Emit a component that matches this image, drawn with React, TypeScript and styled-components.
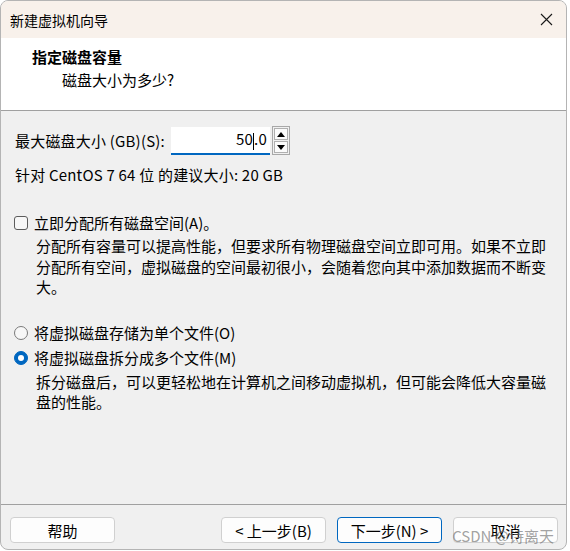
import React from 'react';
import styled, {createGlobalStyle} from 'styled-components';

const GlobalStyle = createGlobalStyle`
  html, body {
    margin: 0;
    padding: 0;
    background: #fff;
  }
  body {
    font-family: 'Noto Sans CJK SC', 'Noto Sans', sans-serif;
    color: #000;
  }
`;

const Window = styled.div`
  position: relative;
  display: flex;
  flex-direction: column;
  width: 565px;
  height: 548px;
  border: 1px solid #b4b4b4;
  border-radius: 8px;
  overflow: hidden;
  background: #f0f0f0;
`;

const TitleBar = styled.div`
  display: flex;
  align-items: center;
  justify-content: space-between;
  height: 37px;
  padding: 0 13px 0 9px;
  background: #f8f1eb;
  font-size: 14px;
`;

const CloseButton = styled.div`
  display: flex;
  width: 13px;
  height: 13px;
`;

const Header = styled.div`
  height: 72px;
  background: #fff;
  border-bottom: 1px solid #a0a0a0;
`;

const HeaderTitle = styled.div`
  margin-top: 9px;
  padding-left: 31px;
  font-size: 15px;
  font-weight: bold;
  line-height: 20px;
`;

const HeaderSub = styled.div`
  margin-top: 3px;
  padding-left: 61px;
  font-size: 15px;
  line-height: 20px;
`;

const Body = styled.div`
  flex: 1;
  padding: 0 0 0 13px;
  font-size: 15px;
  line-height: 20px;
`;

const SizeRow = styled.div`
  display: flex;
  align-items: center;
  margin-top: 15px;
  padding-left: 1px;
  height: 29px;
  letter-spacing: 0.2px;
`;

const NumberBox = styled.div`
  display: flex;
  align-items: center;
  justify-content: flex-end;
  box-sizing: border-box;
  width: 99px;
  height: 28px;
  margin-left: 6px;
  padding-right: 3px;
  background: #fff;
  border-bottom: 2px solid #0067c0;
`;

const Caret = styled.span`
  display: inline-block;
  width: 1px;
  height: 17px;
  background: #000;
  vertical-align: middle;
`;

const Spinner = styled.div`
  display: flex;
  flex-direction: column;
  gap: 1px;
  box-sizing: border-box;
  width: 18px;
  height: 29px;
  margin-left: 2px;
  padding: 1px;
  border: 1px solid #a8a8a8;
  background: #f0f0f0;
`;

const SpinButton = styled.div`
  display: flex;
  flex: 1;
  align-items: center;
  justify-content: center;
  border: 1px solid #b0b0b0;
  background: #fbfbfb;
`;

const Recommend = styled.div`
  margin-top: 10px;
  padding-left: 1px;
  letter-spacing: 0.2px;
`;

const OptionRow = styled.div<{top: number}>`
  display: flex;
  align-items: center;
  gap: 6px;
  margin-top: ${({top}) => top}px;
`;

const CheckBox = styled.span`
  box-sizing: border-box;
  width: 14px;
  height: 14px;
  border: 1px solid #5c5c5c;
  border-radius: 3px;
  background: #f7f7f7;
`;

const Radio = styled.span<{checked?: boolean}>`
  position: relative;
  box-sizing: border-box;
  width: 14px;
  height: 14px;
  border-radius: 50%;
  border: 1px solid ${({checked}) => (checked ? '#0067c0' : '#7a7a7a')};
  background: ${({checked}) => (checked ? '#0067c0' : '#f7f7f7')};

  &::after {
    content: '';
    display: ${({checked}) => (checked ? 'block' : 'none')};
    position: absolute;
    left: 3px;
    top: 3px;
    width: 6px;
    height: 6px;
    border-radius: 50%;
    background: #fff;
  }
`;

const Note = styled.div<{top: number}>`
  margin: ${({top}) => top}px 0 0 22px;
  line-height: 20.5px;
`;

const NoteLine = styled.div`
  white-space: nowrap;
`;

const Footer = styled.div`
  position: relative;
  display: flex;
  gap: 11px;
  height: 45px;
  padding: 12px 8px 0 9px;
  box-sizing: border-box;
  border-top: 1px solid #a0a0a0;
`;

const Button = styled.div<{primary?: boolean; push?: boolean}>`
  display: flex;
  align-items: center;
  justify-content: center;
  box-sizing: border-box;
  width: 105px;
  height: 26px;
  margin-right: ${({push}) => (push ? 'auto' : '0')};
  border: 1px solid ${({primary}) => (primary ? '#0067c0' : '#d0d0d0')};
  border-radius: 4px;
  background: #fdfdfd;
  font-size: 15px;
`;

const Watermark = styled.div`
  position: absolute;
  right: 12px;
  bottom: 3px;
  font-family: 'Noto Sans CJK SC', sans-serif;
  font-size: 15px;
  color: rgba(110, 110, 110, 0.65);
  pointer-events: none;
`;

const Arrow = ({up}: {up?: boolean}) => (
  <svg width="8" height="5" viewBox="0 0 8 5">
    <path d={up ? 'M0 5 L4 0 L8 5 Z' : 'M0 0 L8 0 L4 5 Z'} fill="#000" />
  </svg>
);

const allocNote = [
  '分配所有容量可以提高性能，但要求所有物理磁盘空间立即可用。如果不立即',
  '分配所有空间，虚拟磁盘的空间最初很小，会随着您向其中添加数据而不断变',
  '大。',
];

const splitNote = [
  '拆分磁盘后，可以更轻松地在计算机之间移动虚拟机，但可能会降低大容量磁',
  '盘的性能。',
];

export default function App() {
  return (
    <>
      <GlobalStyle />
      <Window>
        <TitleBar>
          <span>新建虚拟机向导</span>
          <CloseButton>
            <svg width="13" height="13" viewBox="0 0 13 13">
              <path d="M1 1 L12 12 M12 1 L1 12" stroke="#1a1a1a" strokeWidth="1.1" />
            </svg>
          </CloseButton>
        </TitleBar>
        <Header>
          <HeaderTitle>指定磁盘容量</HeaderTitle>
          <HeaderSub>磁盘大小为多少?</HeaderSub>
        </Header>
        <Body>
          <SizeRow>
            <span>最大磁盘大小 (GB)(S):</span>
            <NumberBox>
              <span>
                50<Caret />.0
              </span>
            </NumberBox>
            <Spinner>
              <SpinButton>
                <Arrow up />
              </SpinButton>
              <SpinButton>
                <Arrow />
              </SpinButton>
            </Spinner>
          </SizeRow>
          <Recommend>针对 CentOS 7 64 位 的建议大小: 20 GB</Recommend>

          <OptionRow top={28}>
            <CheckBox />
            <span>立即分配所有磁盘空间(A)。</span>
          </OptionRow>
          <Note top={3}>
            {allocNote.map((line) => (
              <NoteLine key={line}>{line}</NoteLine>
            ))}
          </Note>

          <OptionRow top={25}>
            <Radio />
            <span>将虚拟磁盘存储为单个文件(O)</span>
          </OptionRow>
          <OptionRow top={5}>
            <Radio checked />
            <span>将虚拟磁盘拆分成多个文件(M)</span>
          </OptionRow>
          <Note top={4}>
            {splitNote.map((line) => (
              <NoteLine key={line}>{line}</NoteLine>
            ))}
          </Note>
        </Body>
        <Footer>
          <Button push>帮助</Button>
          <Button>&lt; 上一步(B)</Button>
          <Button primary>下一步(N) &gt;</Button>
          <Button>取消</Button>
          <Watermark>CSDN @诗离天</Watermark>
        </Footer>
      </Window>
    </>
  );
}
